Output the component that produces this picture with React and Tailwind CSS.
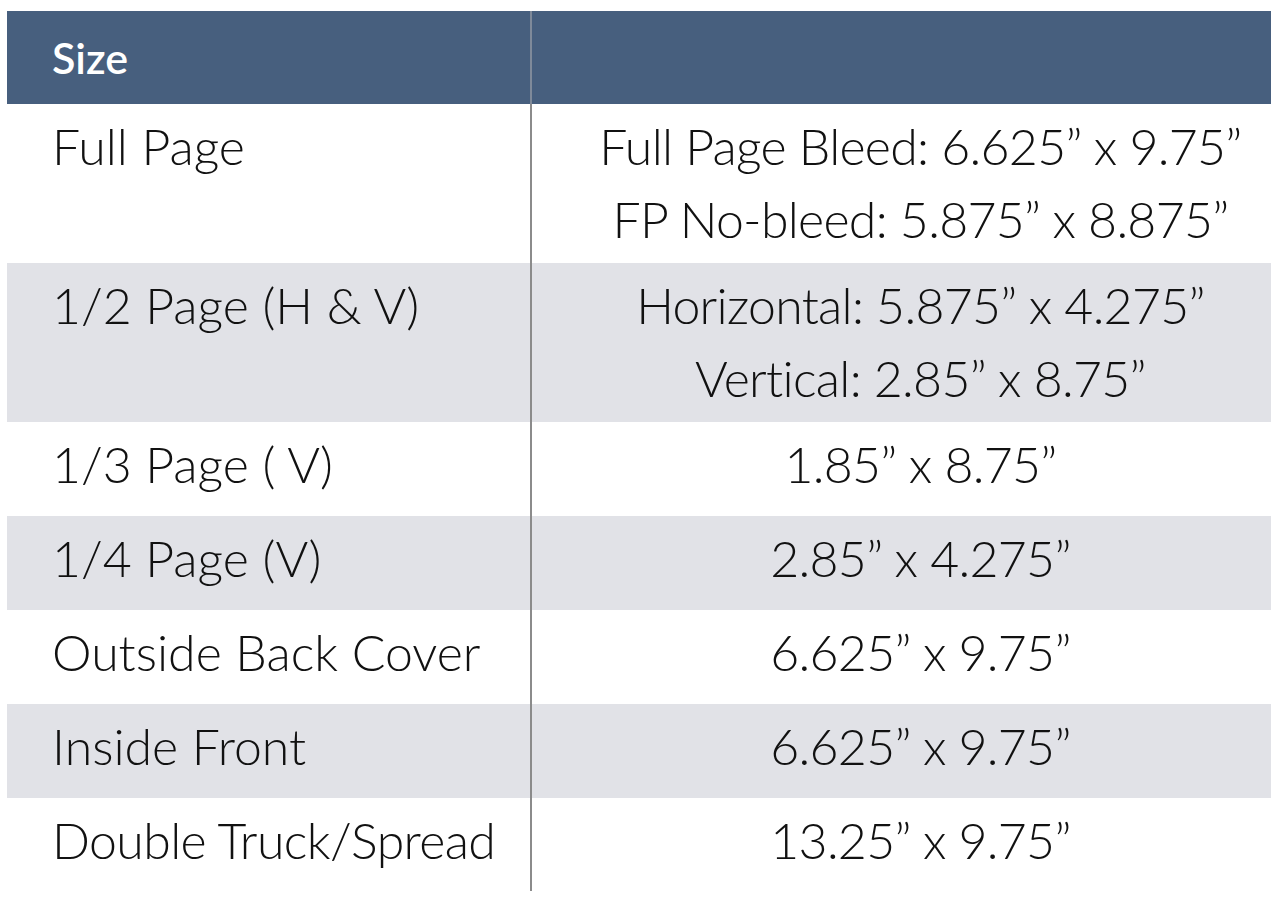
export default function App() {
  const rows = [
    { label: "Full Page", lines: ["Full Page Bleed: 6.625\u201D x 9.75\u201D", "FP No-bleed: 5.875\u201D x 8.875\u201D"], gray: false },
    { label: "1/2 Page (H & V)", lines: ["Horizontal: 5.875\u201D x 4.275\u201D", "Vertical: 2.85\u201D x 8.75\u201D"], gray: true },
    { label: "1/3 Page ( V)", lines: ["1.85\u201D x 8.75\u201D"], gray: false },
    { label: "1/4 Page (V)", lines: ["2.85\u201D x 4.275\u201D"], gray: true },
    { label: "Outside Back Cover", lines: ["6.625\u201D x 9.75\u201D"], gray: false },
    { label: "Inside Front", lines: ["6.625\u201D x 9.75\u201D"], gray: true },
    { label: "Double Truck/Spread", lines: ["13.25\u201D x 9.75\u201D"], gray: false },
  ];
  return (
    <div className="min-h-[908px] bg-white pt-[11px] pl-[7px] text-[#111]" style={{ fontFamily: "Lato, 'Open Sans', sans-serif" }}>
      <div className="grid grid-cols-[523px_1fr]">
        <div className="h-[93px] bg-[#475f7e] pl-[45px] pt-[26px] text-[43px] font-semibold leading-[42px] text-white">Size</div>
        <div className="h-[93px] border-l-2 border-[#7f8a9a] bg-[#475f7e]"></div>
        {rows.map((r, i) => {
          const bg = r.gray ? "bg-[#e1e2e7]" : "bg-white";
          const h = r.lines.length > 1 ? "h-[159px]" : (i === 6 ? "h-[93px]" : "h-[94px]");
          return [
            <div key={"l" + i} className={`${bg} ${h} pl-[45px] pt-[6px] text-[50px] font-light leading-[73px] ${i === 6 ? "tracking-[-0.6px]" : ""}`}>{r.label}</div>,
            <div key={"r" + i} className={`${bg} ${h} border-l-2 border-[#8b8b8b] pl-[38px] pt-[6px] text-center text-[50px] font-light leading-[73px] tracking-[-0.7px]`}>
              {r.lines.map((t, j) => (<div key={j}>{t}</div>))}
            </div>,
          ];
        })}
      </div>
    </div>
  );
}
